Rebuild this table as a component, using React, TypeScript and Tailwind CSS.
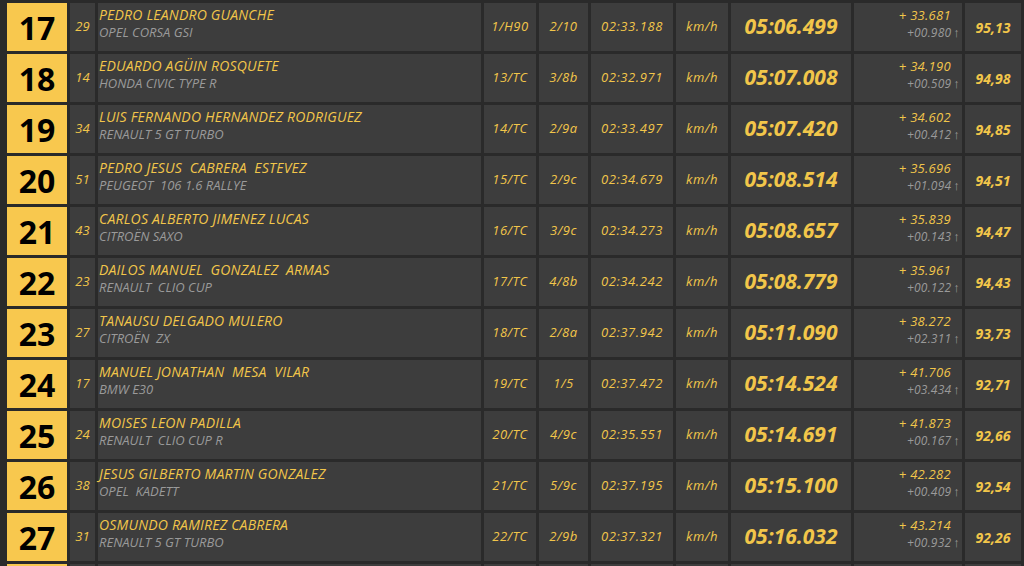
const ROWS = [
  ['17', '29', 'PEDRO LEANDRO GUANCHE', 'OPEL CORSA GSI', '1/H90', '2/10', '02:33.188', '05:06.499', '+ 33.681', '+00.980', '95,13'],
  ['18', '14', 'EDUARDO AGÜIN ROSQUETE', 'HONDA CIVIC TYPE R', '13/TC', '3/8b', '02:32.971', '05:07.008', '+ 34.190', '+00.509', '94,98'],
  ['19', '34', 'LUIS FERNANDO HERNANDEZ RODRIGUEZ', 'RENAULT 5 GT TURBO', '14/TC', '2/9a', '02:33.497', '05:07.420', '+ 34.602', '+00.412', '94,85'],
  ['20', '51', 'PEDRO JESUS  CABRERA  ESTEVEZ', 'PEUGEOT  106 1.6 RALLYE', '15/TC', '2/9c', '02:34.679', '05:08.514', '+ 35.696', '+01.094', '94,51'],
  ['21', '43', 'CARLOS ALBERTO JIMENEZ LUCAS', 'CITROËN SAXO', '16/TC', '3/9c', '02:34.273', '05:08.657', '+ 35.839', '+00.143', '94,47'],
  ['22', '23', 'DAILOS MANUEL  GONZALEZ  ARMAS', 'RENAULT  CLIO CUP', '17/TC', '4/8b', '02:34.242', '05:08.779', '+ 35.961', '+00.122', '94,43'],
  ['23', '27', 'TANAUSU DELGADO MULERO', 'CITROËN  ZX', '18/TC', '2/8a', '02:37.942', '05:11.090', '+ 38.272', '+02.311', '93,73'],
  ['24', '17', 'MANUEL JONATHAN  MESA  VILAR', 'BMW E30', '19/TC', '1/5', '02:37.472', '05:14.524', '+ 41.706', '+03.434', '92,71'],
  ['25', '24', 'MOISES LEON PADILLA', 'RENAULT  CLIO CUP R', '20/TC', '4/9c', '02:35.551', '05:14.691', '+ 41.873', '+00.167', '92,66'],
  ['26', '38', 'JESUS GILBERTO MARTIN GONZALEZ', 'OPEL  KADETT', '21/TC', '5/9c', '02:37.195', '05:15.100', '+ 42.282', '+00.409', '92,54'],
  ['27', '31', 'OSMUNDO RAMIREZ CABRERA', 'RENAULT 5 GT TURBO', '22/TC', '2/9b', '02:37.321', '05:16.032', '+ 43.214', '+00.932', '92,26'],
]

const cols =
  'grid h-[48px] shrink-0 grid-cols-[60px_25px_383px_52px_49px_82px_52px_120px_108px_56px] gap-x-[3px]'
const cell = 'flex items-center justify-center bg-[#3d3d3d]'

function ResultRow({ row }: { row: string[] }) {
  const [pos, num, driver, car, cls, group, stage, total, gap, diff, pct] = row
  return (
    <div className={cols}>
      <div className="flex items-center justify-center bg-[#f8c84e] pt-[1px] text-[32px] leading-none font-bold text-black">
        {pos}
      </div>
      <div className={`${cell} text-[13px] font-medium italic text-[#f2c64a]`}>{num}</div>
      <div className="flex flex-col bg-[#3d3d3d] pt-[3px] pl-[1px] italic whitespace-pre">
        <span className="text-[14px] leading-[18px] font-medium tracking-[0.2px] text-[#f2c64a]">
          {driver}
        </span>
        <span className="text-[13px] leading-[17px] text-[#9a9a9a]">{car}</span>
      </div>
      <div className={`${cell} text-[13px] font-medium italic tracking-[0.5px] text-[#f2c64a]`}>
        {cls}
      </div>
      <div className={`${cell} text-[13px] font-medium italic tracking-[0.5px] text-[#f2c64a]`}>
        {group}
      </div>
      <div className={`${cell} text-[13px] font-medium italic tracking-[0.6px] text-[#f2c64a]`}>
        {stage}
      </div>
      <div className={`${cell} text-[13px] font-medium italic tracking-[0.6px] text-[#f2c64a]`}>
        km/h
      </div>
      <div className={`${cell} text-[21px] font-bold italic text-[#f2c64a]`}>
        {total}
      </div>
      <div className="flex flex-col items-end bg-[#3d3d3d] pt-[3px] pr-[2px] italic">
        <span className="mr-[9px] text-[13px] leading-[18px] font-medium tracking-[0.3px] text-[#f2c64a]">
          {gap}
        </span>
        <span className="flex items-center text-[12px] leading-[17px] tracking-[0.2px] text-[#9a9a9a]">
          {diff}
          <span className="ml-[2px] text-[13px] not-italic">↑</span>
        </span>
      </div>
      <div className={`${cell} text-[14px] font-bold italic text-[#f2c64a]`}>{pct}</div>
    </div>
  )
}

function EmptyRow() {
  return (
    <div className={cols}>
      <div className="bg-[#f8c84e]" />
      {Array.from({ length: 9 }, (_, i) => (
        <div key={i} className="bg-[#3d3d3d]" />
      ))}
    </div>
  )
}

export default function App() {
  return (
    <div className="h-[566px] w-[1024px] overflow-hidden bg-[#2a2a2a] font-['Open_Sans',sans-serif]">
      <div className="flex flex-col gap-y-[3px] pt-[3px] pl-[7px]">
        {ROWS.map((row) => (
          <ResultRow key={row[0]} row={row} />
        ))}
        <EmptyRow />
      </div>
    </div>
  )
}
